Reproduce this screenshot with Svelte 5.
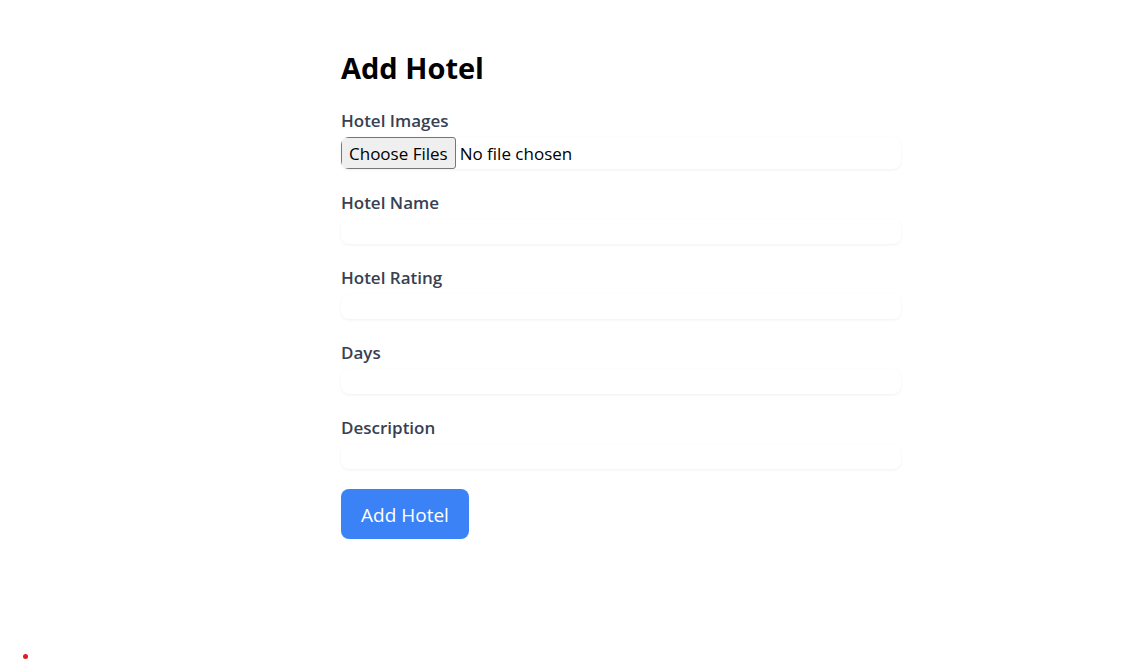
<script>
  let name = $state('');
  let rating = $state('');
  let days = $state('');
  let description = $state('');

  function submit(event) {
    event.preventDefault();
  }
</script>

<div class="page">
  <main>
    <h1>Add Hotel</h1>
    <form onsubmit={submit}>
      <div class="field">
        <label for="images">Hotel Images</label>
        <input id="images" class="file" type="file" multiple />
      </div>
      <div class="field">
        <label for="name">Hotel Name</label>
        <input id="name" type="text" bind:value={name} />
      </div>
      <div class="field">
        <label for="rating">Hotel Rating</label>
        <input id="rating" type="text" bind:value={rating} />
      </div>
      <div class="field">
        <label for="days">Days</label>
        <input id="days" type="text" bind:value={days} />
      </div>
      <div class="field">
        <label for="description">Description</label>
        <input id="description" type="text" bind:value={description} />
      </div>
      <button type="submit">Add Hotel</button>
    </form>
  </main>
  <span class="dot"></span>
</div>

<style>
  :global(body) {
    margin: 0;
    background: #fff;
  }

  .page {
    box-sizing: border-box;
    min-height: 100vh;
    display: flex;
    flex-direction: column;
    justify-content: space-between;
    padding: 48px 0 1px;
    font-family: 'Segoe UI', 'Open Sans', 'Noto Sans', sans-serif;
    color: #000;
  }

  main {
    box-sizing: border-box;
    width: 100%;
    max-width: 678px;
    margin: 0 auto;
    padding-left: 118px;
  }

  h1 {
    margin: 0 0 19px;
    font-size: 29px;
    line-height: 40px;
    font-weight: 700;
  }

  form {
    display: flex;
    flex-direction: column;
    align-items: flex-start;
    gap: 20px;
  }

  .field {
    display: flex;
    flex-direction: column;
    gap: 2px;
    width: 100%;
  }

  label {
    font-size: 17px;
    line-height: 28px;
    font-weight: 600;
    color: #374151;
  }

  input {
    box-sizing: border-box;
    width: 100%;
    height: 25px;
    margin: 0;
    padding: 0;
    border: 0;
    border-radius: 8px;
    background: #fff;
    box-shadow: 0 1px 3px rgba(0, 0, 0, 0.06);
    font: inherit;
    font-size: 17px;
    color: #000;
  }

  .file {
    height: 32px;
    overflow: hidden;
  }

  .file::file-selector-button {
    box-sizing: border-box;
    height: 32px;
    margin: 0 4px 0 0;
    padding: 0 7px;
    border: 1px solid #767676;
    border-radius: 3px;
    background: #efefef;
    font: inherit;
    color: #000;
  }

  button {
    padding: 11px 20px 9px;
    border: 0;
    border-radius: 8px;
    background: #3b82f6;
    font: inherit;
    font-size: 19px;
    line-height: 30px;
    color: #fff;
    cursor: pointer;
  }

  .dot {
    width: 5px;
    height: 5px;
    margin-left: 23px;
    border-radius: 50%;
    background: #e01b22;
  }
</style>
